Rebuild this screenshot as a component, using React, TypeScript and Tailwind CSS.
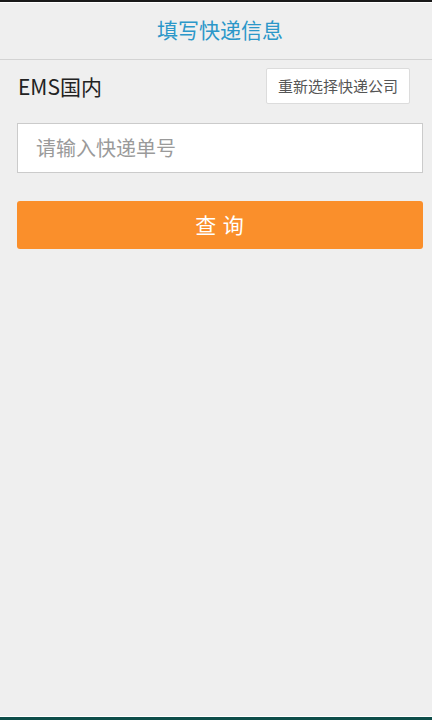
import React from "react";

export default function App() {
  return (
    <div
      className="flex h-[720px] w-[432px] flex-col bg-[#efefef]"
      style={{ fontFamily: '"Noto Sans CJK SC", "Noto Sans", sans-serif' }}
    >
      <div className="h-[2px] bg-[#1a1a1a]" />
      <div className="h-px bg-white" />
      <div className="flex h-[57px] items-center justify-center border-b border-[#d3d3d3] pb-[3px] pl-[8px]">
        <span className="text-[21px] leading-none text-[#2b97c9]">填写快递信息</span>
      </div>
      <div className="flex h-[50px] items-center justify-between pl-[18px] pr-[22px] pt-[2px]">
        <span className="text-[21px] leading-none text-[#222]">EMS国内</span>
        <button className="flex h-[36px] w-[144px] items-center justify-center rounded-[2px] border border-[#dcdcdc] bg-white text-[15px] text-[#555]">
          重新选择快递公司
        </button>
      </div>
      <div className="ml-[17px] mt-[13px] flex h-[50px] w-[406px] items-center border border-[#cbcbcb] bg-white pl-[18px]">
        <span className="text-[20px] leading-none text-[#9a9a9a]">请输入快递单号</span>
      </div>
      <button className="ml-[17px] mt-[28px] flex h-[48px] w-[406px] items-center justify-center rounded-[3px] bg-[#fa8f2b] text-[21px] tracking-[1px] text-white">
        查 询
      </button>
      <div className="flex-1" />
      <div className="h-px bg-white" />
      <div className="h-[3px] bg-[#0d4d49]" />
    </div>
  );
}
